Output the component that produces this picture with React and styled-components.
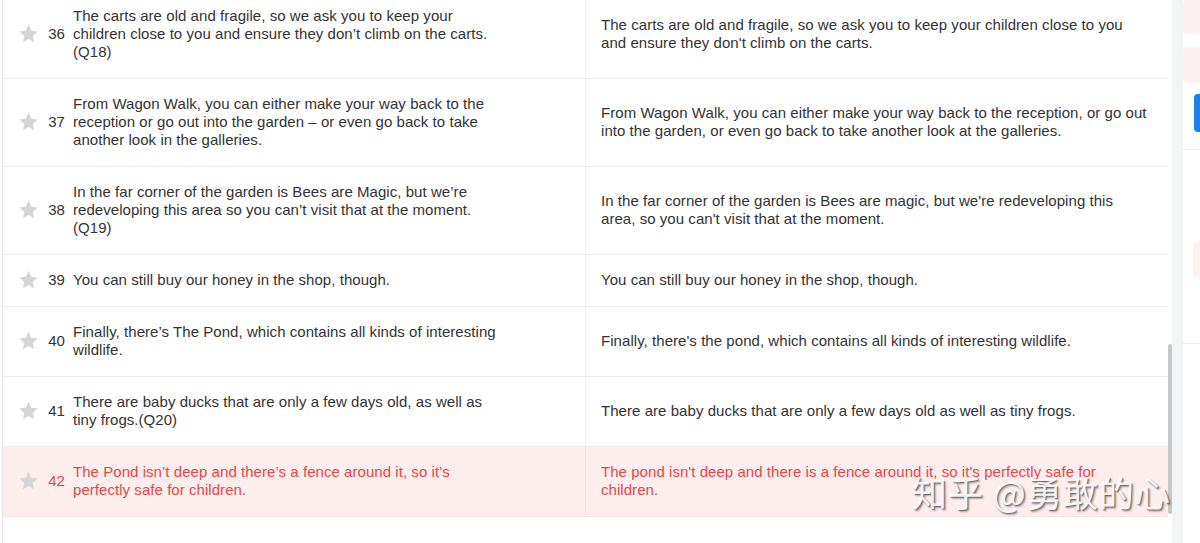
import React from 'react';
import styled, { createGlobalStyle } from 'styled-components';

const GlobalStyle = createGlobalStyle`
  html, body {
    margin: 0;
    padding: 0;
    background: #fff;
  }
  body {
    font-family: "Liberation Sans", Arial, sans-serif;
  }
`;

const Page = styled.div`
  position: relative;
  display: flex;
  width: 1200px;
  height: 543px;
  overflow: hidden;
  background: #fff;
`;

const TablePanel = styled.div`
  display: flex;
  margin-left: 2px;
  border-left: 1px solid #e6e6e6;
  width: 1169px;
  height: 543px;
  overflow: hidden;
`;

const Table = styled.div`
  width: 1165px;
  margin-top: -9px;
  align-self: flex-start;
`;

const Row = styled.div`
  display: grid;
  grid-template-columns: 582px 583px;
  border-bottom: ${p => (p.$alert ? '1px solid #f9e4e4' : '1px solid #ececec')};
  background: ${p => (p.$alert ? '#fdeeee' : '#fff')};
  color: ${p => (p.$alert ? '#e0494b' : '#333')};
  font-size: 15px;
  line-height: 18px;
  letter-spacing: 0.05px;
`;

const SourceCell = styled.div`
  display: flex;
  align-items: center;
  padding: 16px 0 17px 15px;
`;

const StarIcon = styled.svg`
  flex: none;
  width: 21px;
  height: 20px;
  margin: -1px 0;
`;

const Num = styled.span`
  flex: none;
  width: 20px;
  margin-left: 6px;
  margin-right: 8px;
  text-align: right;
`;

const SourceText = styled.div`
  width: 430px;
`;

const TargetCell = styled.div`
  display: flex;
  align-items: center;
  border-left: 1px solid ${p => (p.$alert ? '#f7e2e2' : '#f0f0f0')};
  padding: 16px 18px 17px 15px;
`;

const ScrollTrack = styled.div`
  flex: none;
  width: 4px;
  display: flex;
  flex-direction: column;
`;

const ScrollThumb = styled.div`
  margin-top: 344px;
  height: 170px;
  background: #c6c8cc;
  border-radius: 2px;
`;

const Gutter = styled.div`
  flex: none;
  width: 11px;
  background: #f3f4f6;
`;

const SidePanel = styled.div`
  flex: 1;
  display: flex;
  flex-direction: column;
`;

const SideBlock = styled.div`
  height: ${p => p.$h}px;
  margin-top: ${p => p.$mt || 0}px;
  margin-left: ${p => p.$ml || 0}px;
  background: ${p => p.$bg};
  border-radius: 4px 0 0 4px;
`;

const SideRule = styled.div`
  height: 1px;
  margin-top: ${p => p.$mt}px;
  background: #eceef1;
`;

const Watermark = styled.div`
  position: absolute;
  left: 912px;
  top: 472px;
  font-family: "Noto Sans CJK SC", sans-serif;
  font-size: 35px;
  line-height: 40px;
  letter-spacing: 1px;
  color: rgba(255, 255, 255, 0.92);
  text-shadow: 1px 1px 1px rgba(90, 90, 90, 0.8), 2px 2px 2px rgba(0, 0, 0, 0.3);
  white-space: nowrap;
  pointer-events: none;
`;

const Star = () => (
  <StarIcon viewBox="0 0 24 23">
    <path
      d="M12 1l3.1 6.9 7.4.8-5.6 5 1.6 7.4L12 17.3l-6.5 3.8 1.6-7.4-5.6-5 7.4-.8z"
      fill="#d5d5d5"
    />
  </StarIcon>
);

const rows = [
  {
    n: 36,
    src: 'The carts are old and fragile, so we ask you to keep your children close to you and ensure they don’t climb on the carts. (Q18)',
    dst: "The carts are old and fragile, so we ask you to keep your children close to you and ensure they don't climb on the carts.",
  },
  {
    n: 37,
    src: 'From Wagon Walk, you can either make your way back to the reception or go out into the garden – or even go back to take another look in the galleries.',
    dst: 'From Wagon Walk, you can either make your way back to the reception, or go out into the garden, or even go back to take another look at the galleries.',
  },
  {
    n: 38,
    src: 'In the far corner of the garden is Bees are Magic, but we’re redeveloping this area so you can’t visit that at the moment. (Q19)',
    dst: "In the far corner of the garden is Bees are magic, but we're redeveloping this area, so you can't visit that at the moment.",
  },
  {
    n: 39,
    src: 'You can still buy our honey in the shop, though.',
    dst: 'You can still buy our honey in the shop, though.',
  },
  {
    n: 40,
    src: 'Finally, there’s The Pond, which contains all kinds of interesting wildlife.',
    dst: "Finally, there's the pond, which contains all kinds of interesting wildlife.",
  },
  {
    n: 41,
    src: 'There are baby ducks that are only a few days old, as well as tiny frogs.(Q20)',
    dst: 'There are baby ducks that are only a few days old as well as tiny frogs.',
  },
  {
    n: 42,
    alert: true,
    src: 'The Pond isn’t deep and there’s a fence around it, so it’s perfectly safe for children.',
    dst: "The pond isn't deep and there is a fence around it, so it's perfectly safe for children.",
  },
];

export default function App() {
  return (
    <>
      <GlobalStyle />
      <Page>
        <TablePanel>
          <Table>
            {rows.map(r => (
              <Row key={r.n} $alert={r.alert}>
                <SourceCell>
                  <Star />
                  <Num>{r.n}</Num>
                  <SourceText>{r.src}</SourceText>
                </SourceCell>
                <TargetCell $alert={r.alert}>{r.dst}</TargetCell>
              </Row>
            ))}
          </Table>
          <ScrollTrack>
            <ScrollThumb />
          </ScrollTrack>
        </TablePanel>
        <Gutter />
        <SidePanel>
          <SideBlock $h={34} $bg="#fdf1f1" />
          <SideBlock $h={36} $mt={13} $bg="#fdf1f1" />
          <SideBlock $h={38} $mt={11} $ml={11} $bg="#1a7fe8" />
          <SideRule $mt={17} />
          <SideBlock $h={35} $mt={92} $ml={10} $bg="#fdf1f1" />
          <SideRule $mt={66} />
        </SidePanel>
        <Watermark>知乎 @勇敢的心</Watermark>
      </Page>
    </>
  );
}
